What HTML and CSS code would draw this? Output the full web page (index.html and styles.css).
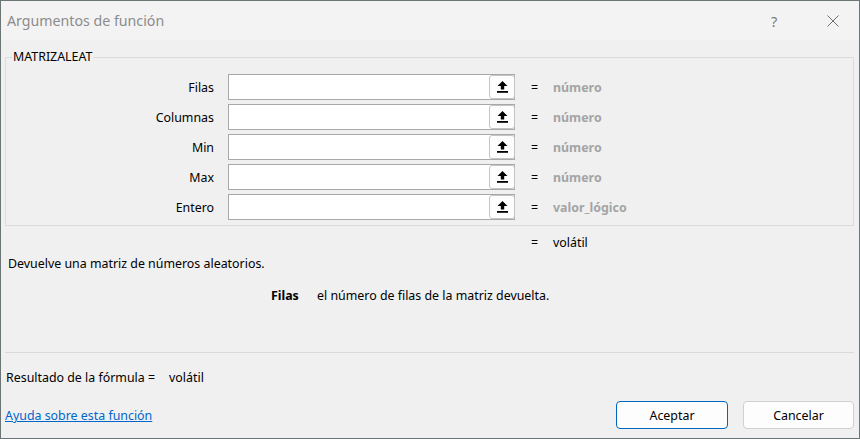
FILE: index.html
```html
<!DOCTYPE html>
<html lang="es">
<head>
<meta charset="utf-8">
<title>Argumentos de función</title>
<link rel="stylesheet" href="styles.css">
</head>
<body>
<div class="window">
  <div class="titlebar">
    <span class="title">Argumentos de función</span>
    <span class="help">?</span>
    <span class="close">
      <svg width="12" height="12" viewBox="0 0 12 12"><path d="M0.5 0.5 L11.5 11.5 M11.5 0.5 L0.5 11.5" stroke="#707070" stroke-width="1" fill="none"/></svg>
    </span>
  </div>
  <div class="content">
    <div class="group">
      <span class="group-title">MATRIZALEAT</span>
      <div class="arg-row">
        <span class="arg-label">Filas</span>
        <span class="arg-input"><span class="ref-btn"><svg width="11" height="12" viewBox="0 0 11 12"><path d="M5.5 0 L0.5 5 H3.8 V8.5 H7.2 V5 H10.5 Z" fill="#000"/><rect x="0" y="10" width="11" height="1.8" fill="#000"/></svg></span></span>
        <span class="arg-eq">=</span>
        <span class="arg-type">número</span>
      </div>
      <div class="arg-row">
        <span class="arg-label">Columnas</span>
        <span class="arg-input"><span class="ref-btn"><svg width="11" height="12" viewBox="0 0 11 12"><path d="M5.5 0 L0.5 5 H3.8 V8.5 H7.2 V5 H10.5 Z" fill="#000"/><rect x="0" y="10" width="11" height="1.8" fill="#000"/></svg></span></span>
        <span class="arg-eq">=</span>
        <span class="arg-type">número</span>
      </div>
      <div class="arg-row">
        <span class="arg-label">Min</span>
        <span class="arg-input"><span class="ref-btn"><svg width="11" height="12" viewBox="0 0 11 12"><path d="M5.5 0 L0.5 5 H3.8 V8.5 H7.2 V5 H10.5 Z" fill="#000"/><rect x="0" y="10" width="11" height="1.8" fill="#000"/></svg></span></span>
        <span class="arg-eq">=</span>
        <span class="arg-type">número</span>
      </div>
      <div class="arg-row">
        <span class="arg-label">Max</span>
        <span class="arg-input"><span class="ref-btn"><svg width="11" height="12" viewBox="0 0 11 12"><path d="M5.5 0 L0.5 5 H3.8 V8.5 H7.2 V5 H10.5 Z" fill="#000"/><rect x="0" y="10" width="11" height="1.8" fill="#000"/></svg></span></span>
        <span class="arg-eq">=</span>
        <span class="arg-type">número</span>
      </div>
      <div class="arg-row">
        <span class="arg-label">Entero</span>
        <span class="arg-input"><span class="ref-btn"><svg width="11" height="12" viewBox="0 0 11 12"><path d="M5.5 0 L0.5 5 H3.8 V8.5 H7.2 V5 H10.5 Z" fill="#000"/><rect x="0" y="10" width="11" height="1.8" fill="#000"/></svg></span></span>
        <span class="arg-eq">=</span>
        <span class="arg-type">valor_lógico</span>
      </div>
    </div>
    <div class="volatile-row">
      <span class="arg-eq">=</span>
      <span class="volatile">volátil</span>
    </div>
    <div class="desc">Devuelve una matriz de números aleatorios.</div>
    <div class="arg-desc">
      <span class="arg-desc-name">Filas</span>
      <span class="arg-desc-text">el número de filas de la matriz devuelta.</span>
    </div>
    <div class="separator"></div>
    <div class="result">
      <span>Resultado de la fórmula =</span>
      <span class="result-value">volátil</span>
    </div>
    <div class="footer">
      <a class="help-link" href="#">Ayuda sobre esta función</a>
      <div class="buttons">
        <button class="btn btn-primary">Aceptar</button>
        <button class="btn">Cancelar</button>
      </div>
    </div>
  </div>
</div>
</body>
</html>
```

FILE: styles.css
```css
html, body {
  margin: 0;
  padding: 0;
}
body {
  font-family: "Segoe UI", "Noto Sans", "Open Sans", sans-serif;
  font-size: 12.4px;
  color: #000;
  background: #f0f0f0;
}
.window {
  width: 860px;
  height: 439px;
  box-sizing: border-box;
  border: 1px solid #6b7575;
  background: #f0f0f0;
  display: flex;
  flex-direction: column;
}
.titlebar {
  height: 39px;
  flex: none;
  background: #f3f3f3;
  display: flex;
  align-items: center;
}
.title {
  margin-left: 6px;
  font-size: 14.2px;
  color: #8c8c8c;
  flex: 1;
}
.help {
  font-size: 14.5px;
  color: #7a7a7a;
  width: 10px;
  margin-right: 46px;
}
.close {
  display: flex;
  align-items: center;
  margin-right: 20px;
}
.content {
  flex: 1;
  display: flex;
  flex-direction: column;
  padding: 0 5px 0 4px;
}
.group {
  margin-top: 17px;
  border: 1px solid #dcdcdc;
  position: relative;
  padding: 16px 0 5px 0;
  display: flex;
  flex-direction: column;
  gap: 4px;
}
.group-title {
  position: absolute;
  top: -9px;
  left: 6px;
  padding: 0 1px;
  background: #f0f0f0;
  line-height: 16px;
}
.arg-row {
  display: flex;
  align-items: center;
  height: 26px;
}
.arg-label {
  width: 208px;
  text-align: right;
  margin-right: 14px;
}
.arg-input {
  width: 287px;
  height: 26px;
  box-sizing: border-box;
  border: 1px solid #a8a8a8;
  background: #fff;
  display: flex;
  justify-content: flex-end;
}
.ref-btn {
  width: 26px;
  height: 24px;
  box-sizing: border-box;
  border: 1px solid #c4c4c4;
  border-radius: 3px;
  background: #fdfdfd;
  margin-right: -1px;
  display: flex;
  align-items: center;
  justify-content: center;
}
.arg-eq {
  margin-left: 16px;
  width: 22px;
}
.arg-type {
  font-weight: bold;
  color: #a4a4a4;
}
.volatile-row {
  display: flex;
  margin-top: 9px;
  line-height: 16px;
  padding-left: 526px;
}
.volatile-row .arg-eq {
  margin-left: 0;
}
.desc {
  margin-top: 5px;
  line-height: 16px;
  padding-left: 3px;
}
.arg-desc {
  margin-top: 16px;
  line-height: 16px;
  display: flex;
  padding-left: 266px;
}
.arg-desc-name {
  font-weight: bold;
  width: 46px;
}
.separator {
  margin-top: 48px;
  height: 1px;
  background: #dadada;
}
.result {
  margin-top: 17px;
  line-height: 16px;
  display: flex;
  padding-left: 1px;
}
.result-value {
  margin-left: 14px;
}
.footer {
  margin-top: 15px;
  display: flex;
  align-items: center;
  justify-content: space-between;
}
.help-link {
  color: #0066cc;
  text-decoration: underline;
  margin-top: 1px;
}
.buttons {
  display: flex;
  gap: 15px;
}
.btn {
  font-family: inherit;
  font-size: 12.4px;
  color: #000;
  height: 28px;
  width: 112px;
  border: 1px solid #d0d0d0;
  border-radius: 4px;
  background: #fdfdfd;
  padding: 0;
}
.btn-primary {
  border-color: #0067c0;
}
.btn:last-child {
  width: 111px;
}
```
